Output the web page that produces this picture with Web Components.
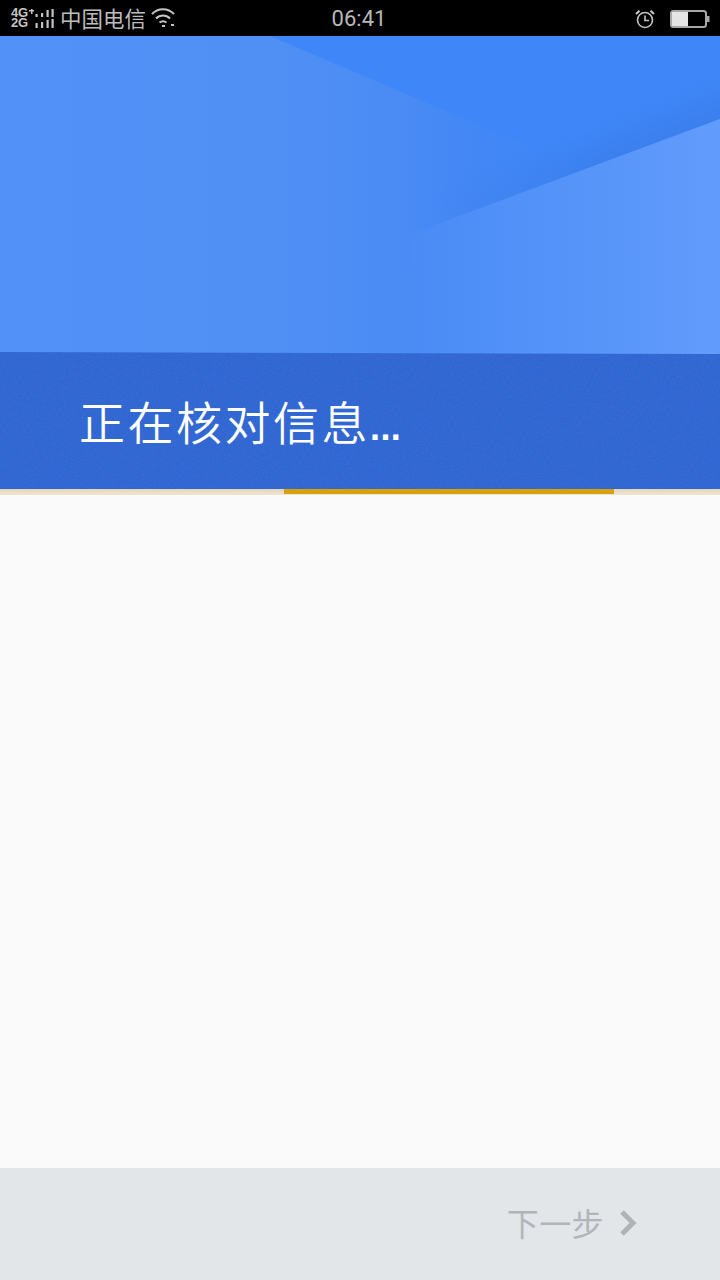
<!DOCTYPE html>
<html lang="zh">
<head>
<meta charset="utf-8">
<style>
  html, body { margin: 0; padding: 0; height: 1280px; overflow: hidden; background: #fafafa; }
  body { display: flex; flex-direction: column; font-family: "Noto Sans CJK SC", "Noto Sans", sans-serif; }
</style>
</head>
<body>
<status-bar carrier="中国电信" time="06:41"></status-bar>
<verify-banner>正在核对信息<span style="font: 700 36px/1 'Liberation Sans', sans-serif; letter-spacing: .4px">...</span></verify-banner>
<step-progress></step-progress>
<main-area></main-area>
<bottom-bar>下一步</bottom-bar>
<script>
class StatusBar extends HTMLElement {
  constructor() {
    super();
    this.attachShadow({ mode: 'open' });
  }
  connectedCallback() {
    const carrier = this.getAttribute('carrier') || '';
    const time = this.getAttribute('time') || '';
    this.shadowRoot.innerHTML = `
      <style>
        :host { display: grid; grid-template-columns: 1fr auto 1fr; align-items: center; height: 36px; flex: none; background: #000; color: #c4c4c4; }
        .left { display: flex; align-items: center; padding-left: 11px; }
        .net { font: 700 13px/10px "Liberation Sans", sans-serif; width: 23px; position: relative; top: -1px; letter-spacing: -.3px; }
        .net::after { content: ""; position: absolute; left: 18px; top: 1px; width: 5px; height: 5px;
          background: linear-gradient(#c4c4c4, #c4c4c4) center / 5px 1.500px no-repeat, linear-gradient(#c4c4c4, #c4c4c4) center / 1.500px 5px no-repeat; }
        .carrier { font-size: 21.5px; line-height: 36px; margin-left: 6px; color: #bdbdbd; position: relative; top: -1px; }
        .time { font: 22px/36px Roboto, sans-serif; color: #b8b8b8; padding-top: 1px; margin-left: -2px; }
        .right { display: flex; justify-content: flex-end; align-items: center; padding-right: 10px; gap: 14px; }
        svg { display: block; }
      </style>
      <div class="left">
        <div class="net">4G 2G</div>
        <svg width="20" height="22" viewBox="0 0 20 22" fill="#c4c4c4">
          <rect x="1.500" y="6" width="2.200" height="3"/><rect x="1.500" y="15" width="2.200" height="5"/>
          <rect x="7" y="5" width="2.200" height="4"/><rect x="7" y="14" width="2.200" height="6"/>
          <rect x="12.500" y="2" width="2.200" height="7"/><rect x="12.500" y="12" width="2.200" height="8"/>
          <rect x="17.500" y="1" width="2.200" height="8"/><rect x="17.500" y="11" width="2.200" height="9"/>
        </svg>
        <span class="carrier">${carrier}</span>
        <svg width="26" height="22" viewBox="0 0 26 22" fill="none" stroke="#c4c4c4" stroke-width="2" style="margin-left:4px; position:relative; top:-1px">
          <path d="M2 7C8 .500 18 .500 24 7"/>
          <path d="M6 11.500C10 7.500 16 7.500 20 11.500"/>
          <path d="M9.500 15.500C11.500 14 14.500 14 16.500 15.500"/>
          <rect x="21" y="17" width="3" height="2" fill="#c4c4c4" stroke="none"/>
          <rect x="12" y="18" width="3" height="2" fill="#c4c4c4" stroke="none"/>
        </svg>
      </div>
      <div class="time">${time}</div>
      <div class="right">
        <svg width="22" height="20" viewBox="0 0 22 20" fill="none" stroke="#c4c4c4" stroke-width="1.600">
          <circle cx="11" cy="11" r="7.500"/>
          <path d="M11 6.500V11.500H15"/>
          <path d="M2 5L5.500 1.800M20 5L16.500 1.800" stroke-width="2.200"/>
        </svg>
        <svg width="40" height="20" viewBox="0 0 40 20">
          <rect x="1" y="2" width="35" height="16" rx="2.500" fill="none" stroke="#a8a8a8" stroke-width="2"/>
          <rect x="2" y="3" width="16" height="14" fill="#e4e4e4"/>
          <rect x="37" y="7" width="2.500" height="6" fill="#a8a8a8"/>
        </svg>
      </div>`;
  }
}

class VerifyBanner extends HTMLElement {
  constructor() {
    super();
    this.attachShadow({ mode: 'open' });
    this.shadowRoot.innerHTML = `
      <style>
        :host { display: flex; flex-direction: column; flex: none; height: 453px; position: relative; }
        .art { flex: none; height: 318px; overflow: hidden; }
        .art svg { display: block; }
        .title {
          flex: 1; box-sizing: border-box; padding: 33px 0 0 79px;
          background: #3066d2; color: #fff;
          font-size: 46px; line-height: 66px; letter-spacing: 2.500px; font-weight: 350;
        }
        .grain { position: absolute; left: 0; top: 316px; width: 720px; height: 137px; opacity: .1; pointer-events: none; }
      </style>
      <div class="art">
        <svg width="720" height="318" viewBox="0 0 720 318">
          <defs>
            <linearGradient id="base" gradientUnits="userSpaceOnUse" x1="0" x2="720" y1="0" y2="0">
              <stop offset="0" stop-color="#5292f8"/>
              <stop offset="0.38" stop-color="#5090f5"/>
              <stop offset="0.56" stop-color="#4a8bf4"/>
              <stop offset="0.66" stop-color="#4387f5"/>
              <stop offset="0.80" stop-color="#3f87f7"/>
              <stop offset="1" stop-color="#3f87f8"/>
            </linearGradient>
            <linearGradient id="low" gradientUnits="userSpaceOnUse" x1="405" y1="0" x2="700" y2="0">
              <stop offset="0" stop-color="#5f9bfb" stop-opacity="0"/>
              <stop offset="0.4" stop-color="#5895f9" stop-opacity=".75"/>
              <stop offset="1" stop-color="#619bfb"/>
            </linearGradient>
            <linearGradient id="shade" gradientUnits="userSpaceOnUse" x1="620" y1="77.300" x2="635.300" y2="116.300">
              <stop offset="0" stop-color="#3873df" stop-opacity="0"/>
              <stop offset="1" stop-color="#3873df" stop-opacity=".4"/>
            </linearGradient>
            <linearGradient id="fade" gradientUnits="userSpaceOnUse" x1="430" y1="0" x2="600" y2="0">
              <stop offset="0" stop-color="#000"/>
              <stop offset="1" stop-color="#fff"/>
            </linearGradient>
            <mask id="shadeMask"><rect width="720" height="318" fill="url(#fade)"/></mask>
          </defs>
          <rect width="720" height="318" fill="url(#base)"/>
          <polygon points="270,0 720,0 720,83 587,135" fill="#3f87f8"/>
          <polygon points="720,38 450,144 413,197 720,83" fill="url(#shade)" mask="url(#shadeMask)"/>
          <polygon points="720,83 413,197 402,318 720,318" fill="url(#low)"/>
          <polygon points="0,316 720,318 0,318" fill="#3066d2"/>
        </svg>
      </div>
      <div class="title"><slot></slot></div>
      <svg class="grain" viewBox="0 0 720 137" preserveAspectRatio="none">
        <filter id="n"><feTurbulence type="fractalNoise" baseFrequency=".9" numOctaves="2"/><feColorMatrix values="0 0 0 0 .6 0 0 0 0 .75 0 0 0 0 1 1.600 0 0 0 -.65"/></filter>
        <rect y="2" width="720" height="135" filter="url(#n)"/>
      </svg>`;
  }
}

class StepProgress extends HTMLElement {
  constructor() {
    super();
    this.attachShadow({ mode: 'open' });
    this.shadowRoot.innerHTML = `
      <style>
        :host { display: flex; flex: none; height: 6px; background: linear-gradient(#e4d5b4, #efe6d4); }
        .gap { width: 284px; }
        .fill { width: 330px; background: #d9a20c; height: 5px; }
      </style>
      <div class="gap"></div>
      <div class="fill"></div>`;
  }
}

class MainArea extends HTMLElement {
  constructor() {
    super();
    this.attachShadow({ mode: 'open' });
    this.shadowRoot.innerHTML = `<style>:host { display: block; flex: 1; background: #fafafa; }</style>`;
  }
}

class BottomBar extends HTMLElement {
  constructor() {
    super();
    this.attachShadow({ mode: 'open' });
    this.shadowRoot.innerHTML = `
      <style>
        :host { display: flex; flex: none; height: 112px; box-sizing: border-box; align-items: center; justify-content: flex-end; gap: 15px; padding: 0 81px 0 0; background: #e2e6e9; color: #b2b5b8; font-size: 32px; letter-spacing: .4px; }
        .label { position: relative; top: -2px; }
        svg { display: block; position: relative; top: -1px; }
      </style>
      <span class="label"><slot></slot></span>
      <svg width="20" height="26" viewBox="0 0 20 26" fill="none" stroke="#b0b3b6" stroke-width="5"><path d="M3 2L14 13L3 24"/></svg>`;
  }
}

customElements.define('status-bar', StatusBar);
customElements.define('verify-banner', VerifyBanner);
customElements.define('step-progress', StepProgress);
customElements.define('main-area', MainArea);
customElements.define('bottom-bar', BottomBar);
</script>
</body>
</html>
